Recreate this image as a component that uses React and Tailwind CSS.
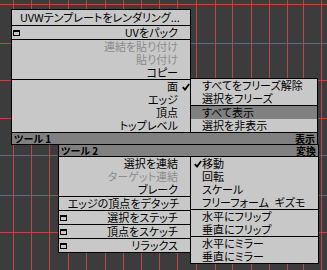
import React from "react";

const VX = [13, 31, 49, 68, 86, 105, 123, 141, 159, 177, 196, 215, 232, 251, 269, 287, 303, 321];
const HY = [4, 43, 80, 118, 155, 195, 232];

function Grid() {
  return (
    <svg className="absolute inset-0" width="327" height="270" viewBox="0 0 327 270">
      {VX.map((x) => (
        <line key={"v" + x} x1={x + 0.5} y1="0" x2={x + 0.5} y2="270" stroke="#b84848" strokeWidth="1" />
      ))}
      {HY.map((y) => (
        <line key={"h" + y} x1="0" y1={y + 0.5} x2="327" y2={y + 0.5} stroke="#b84848" strokeWidth="1" />
      ))}
    </svg>
  );
}

const Check = () => (
  <svg width="8" height="8" viewBox="0 0 8 8" className="block">
    <path d="M0.8 4.2 L3 6.6 L7.2 1" fill="none" stroke="#000" strokeWidth="1.8" />
  </svg>
);

const Box = () => <span className="block w-[7px] h-[6px] border border-black border-t-2" />;

function RRow({ children, disabled, check, icon, tall }) {
  return (
    <div className={"flex items-center " + (tall ? "h-[15px]" : "h-[13px]")}>
      <div className="w-[10px] pl-[1px] flex items-center">{icon ? <Box /> : null}</div>
      <div className={"flex-1 text-right whitespace-nowrap " + (disabled ? "text-[#8c8c8c]" : "text-black")}>
        {children}
      </div>
      <div className="w-[12px] pl-[4px] flex items-center">{check ? <Check /> : null}</div>
    </div>
  );
}

function LRow({ children, check, active }) {
  return (
    <div className={"flex items-center h-[13px] " + (active ? "bg-[#808080]" : "")}>
      <div className="w-[11px] pl-[3px] flex items-center">{check ? <Check /> : null}</div>
      <div className="whitespace-pre text-black">{children}</div>
    </div>
  );
}

const Sep = () => <div className="h-px bg-black" />;

function Bar({ left, right, className }) {
  return (
    <div
      className={
        "h-[13px] border border-black bg-[#808080] flex items-center justify-between px-[2px] text-[10px] leading-[11px] font-bold text-black " +
        className
      }
    >
      <span className="whitespace-pre">{left}</span>
      <span>{right}</span>
    </div>
  );
}

export default function App() {
  return (
    <div className="relative w-[327px] h-[270px] overflow-hidden bg-[#3c3c3c] font-['Noto_Sans_CJK_JP',sans-serif] text-[11px] leading-[13px] [font-feature-settings:'palt']">
      <Grid />
      <div className="absolute left-[11px] top-[9px] flex flex-col">
        <div className="flex items-end">
          <div className="w-[180px] border border-b-0 border-black bg-[#c8c8c8]">
            <RRow tall>UVWテンプレートをレンダリング...</RRow>
            <Sep />
            <RRow icon>UVをパック</RRow>
            <Sep />
            <RRow disabled>連結を貼り付け</RRow>
            <RRow disabled>貼り付け</RRow>
            <RRow>コピー</RRow>
            <Sep />
            <RRow check>面</RRow>
            <RRow>エッジ</RRow>
            <RRow>頂点</RRow>
            <RRow>トップレベル</RRow>
          </div>
          <div className="w-[128px] -ml-px border border-b-0 border-black bg-[#c8c8c8]">
            <LRow>すべてをフリーズ解除</LRow>
            <LRow>選択をフリーズ</LRow>
            <Sep />
            <LRow active>すべて表示</LRow>
            <LRow>選択を非表示</LRow>
          </div>
        </div>
        <Bar left={"ツール 1"} right="表示" className="w-[307px]" />
        <div className="ml-[47px] -mt-px flex flex-col">
          <Bar left={"ツール 2"} right="変換" className="w-[261px]" />
          <div className="flex items-start">
            <div className="w-[133px] border border-t-0 border-black bg-[#c8c8c8]">
              <RRow>選択を連結</RRow>
              <RRow disabled>ターゲット連結</RRow>
              <RRow>ブレーク</RRow>
              <Sep />
              <RRow>エッジの頂点をデタッチ</RRow>
              <Sep />
              <RRow icon>選択をステッチ</RRow>
              <Sep />
              <RRow icon>頂点をスケッチ</RRow>
              <Sep />
              <RRow icon>リラックス</RRow>
            </div>
            <div className="w-[129px] -ml-px border border-t-0 border-black bg-[#c8c8c8]">
              <LRow check>移動</LRow>
              <LRow>回転</LRow>
              <LRow>スケール</LRow>
              <LRow>{"フリーフォーム\u2002ギズモ"}</LRow>
              <Sep />
              <LRow>水平にフリップ</LRow>
              <LRow>垂直にフリップ</LRow>
              <Sep />
              <LRow>水平にミラー</LRow>
              <LRow>垂直にミラー</LRow>
            </div>
          </div>
        </div>
      </div>
    </div>
  );
}
